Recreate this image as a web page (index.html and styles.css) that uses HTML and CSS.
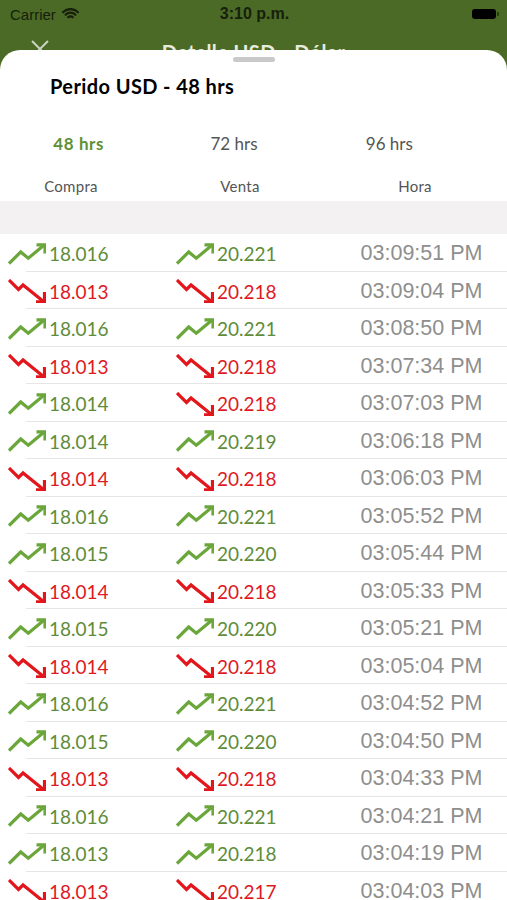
FILE: index.html
```html
<!DOCTYPE html>
<html lang="es">
  <head>
    <title>Detalle USD - Dólar</title>
    <meta charset="UTF-8">
    <meta name="viewport" content="width=device-width, initial-scale=1.0">
    <link rel="stylesheet" href="styles.css">
  </head>

  <body>
    <svg class="defs" width="0" height="0">
      <defs>
        <symbol id="ico-up" viewBox="0 0 38 24">
          <path d="M1 21.5 L12.7 10 L20.3 16.2 L36.5 2.8" />
          <path d="M28.5 2.8 H37 V11.5" />
        </symbol>
        <symbol id="ico-down" viewBox="0 0 38 24">
          <path d="M1 1 L10.5 10.5 L15 6 L35.5 22.5" />
          <path d="M36.5 13 V22.8 H28" />
        </symbol>
      </defs>
    </svg>

    <div class="top">
      <div class="status">
        <div class="carrier">
          Carrier
          <svg class="wifi" width="17" height="12" viewBox="0 0 17 12">
            <path d="M1 4.2 A10.5 10.5 0 0 1 16 4.2" />
            <path d="M3.6 6.8 A6.8 6.8 0 0 1 13.4 6.8" />
            <path d="M6.2 9.3 A3.2 3.2 0 0 1 10.8 9.3" />
          </svg>
        </div>
        <div class="clock">3:10 p.m.</div>
        <div class="battery"><span></span></div>
      </div>
      <div class="nav">
        <svg class="close" width="20" height="20" viewBox="0 0 20 20">
          <path d="M2 2 L18 18 M18 2 L2 18" />
        </svg>
        <div class="nav-title">Detalle USD - Dólar</div>
      </div>
    </div>

    <div class="sheet">
      <div class="grabber"></div>
      <h1 class="sheet-title">Perido USD - 48 hrs</h1>

      <div class="tabs">
        <div class="tab active">48 hrs</div>
        <div class="tab">72 hrs</div>
        <div class="tab">96 hrs</div>
      </div>

      <div class="cols">
        <div>Compra</div>
        <div>Venta</div>
        <div>Hora</div>
      </div>

      <div class="band"></div>

      <div id="list" class="list"></div>
    </div>

    <script>
      // datos del periodo: [compra, tendencia, venta, tendencia, hora]
      var rows = [
        ["18.016", 1, "20.221", 1, "03:09:51 PM"],
        ["18.013", 0, "20.218", 0, "03:09:04 PM"],
        ["18.016", 1, "20.221", 1, "03:08:50 PM"],
        ["18.013", 0, "20.218", 0, "03:07:34 PM"],
        ["18.014", 1, "20.218", 0, "03:07:03 PM"],
        ["18.014", 1, "20.219", 1, "03:06:18 PM"],
        ["18.014", 0, "20.218", 0, "03:06:03 PM"],
        ["18.016", 1, "20.221", 1, "03:05:52 PM"],
        ["18.015", 1, "20.220", 1, "03:05:44 PM"],
        ["18.014", 0, "20.218", 0, "03:05:33 PM"],
        ["18.015", 1, "20.220", 1, "03:05:21 PM"],
        ["18.014", 0, "20.218", 0, "03:05:04 PM"],
        ["18.016", 1, "20.221", 1, "03:04:52 PM"],
        ["18.015", 1, "20.220", 1, "03:04:50 PM"],
        ["18.013", 0, "20.218", 0, "03:04:33 PM"],
        ["18.016", 1, "20.221", 1, "03:04:21 PM"],
        ["18.013", 1, "20.218", 1, "03:04:19 PM"],
        ["18.013", 0, "20.217", 0, "03:04:03 PM"]
      ];

      function cell(value, up) {
        var cls = up ? "up" : "down";
        return '<div class="rate ' + cls + '">' +
          '<svg class="trend"><use href="#ico-' + cls + '"></use></svg>' +
          '<span>' + value + '</span></div>';
      }

      var html = "";
      rows.forEach(function (r) {
        html += '<div class="row">' + cell(r[0], r[1]) + cell(r[2], r[3]) +
          '<div class="time">' + r[4] + '</div></div>';
      });
      document.getElementById("list").innerHTML = html;
    </script>
  </body>
</html>
```

FILE: styles.css
```css
body {
  margin: 0;
  height: 900px;
  overflow: hidden;
  background-color: #4b6a26;
  font-family: Lato, "Open Sans", sans-serif;
}

.defs {
  position: absolute;
}

/* barra de estado + navegacion detras del sheet */
.top {
  height: 50px;
  overflow: hidden;
}

.status {
  height: 28px;
  display: grid;
  grid-template-columns: 1fr auto 1fr;
  align-items: center;
  padding: 0 8px 0 10px;
  color: #16200c;
  font-family: "Liberation Sans", sans-serif;
}

.carrier {
  display: flex;
  align-items: center;
  gap: 6px;
  font-size: 15px;
}

.wifi path {
  fill: none;
  stroke: #16200c;
  stroke-width: 2.2;
  stroke-linecap: round;
}

.clock {
  font-size: 16px;
  font-weight: bold;
}

.battery {
  justify-self: end;
  display: flex;
  align-items: center;
}

.battery span {
  width: 24px;
  height: 10px;
  border-radius: 3px;
  background-color: #000;
}

.battery::after {
  content: "";
  width: 2px;
  height: 4px;
  margin-left: 1px;
  border-radius: 0 1px 1px 0;
  background-color: #2a3a18;
}

.nav {
  display: grid;
  grid-template-columns: 1fr;
  padding-top: 11px;
}

.close {
  grid-area: 1 / 1;
  margin-left: 30px;
}

.close path {
  stroke: #c9d3bf;
  stroke-width: 2;
}

.nav-title {
  grid-area: 1 / 1;
  text-align: center;
  color: #e6ecdf;
  font-size: 20px;
  font-weight: bold;
  letter-spacing: 0.4px;
  line-height: 22px;
  padding-top: 2px;
}

/* sheet */
.sheet {
  background-color: #fff;
  border-radius: 20px 20px 0 0;
  height: 850px;
}

.grabber {
  width: 42px;
  height: 5px;
  margin: 0 auto;
  position: relative;
  top: 7px;
  border-radius: 3px;
  background-color: #c9c9c9;
}

.sheet-title {
  margin: 19px 0 0;
  padding-left: 50px;
  font-size: 20px;
  font-weight: bold;
  letter-spacing: 0.4px;
  line-height: 24px;
  color: #000;
}

.tabs {
  display: grid;
  grid-template-columns: repeat(3, 1fr);
  padding: 0 40px 0 1px;
  margin-top: 36px;
  text-align: center;
  font-size: 17px;
  line-height: 20px;
  color: #555;
}

.tab.active {
  color: #5e9135;
  font-weight: bold;
  letter-spacing: 0.6px;
}

.cols {
  display: grid;
  grid-template-columns: 142px 196px 154px;
  margin-top: 23px;
  text-align: center;
  font-size: 15px;
  letter-spacing: 0.3px;
  line-height: 18px;
  color: #555;
}

.band {
  height: 33px;
  margin-top: 6px;
  background-color: #f3f1f1;
}

.row {
  height: 37.5px;
  display: grid;
  grid-template-columns: 168px 164px 1fr;
  align-items: center;
  padding: 2px 4px 0 8px;
  box-sizing: border-box;
  background: linear-gradient(#e6e6e6, #e6e6e6) no-repeat 26px 100% / calc(100% - 26px) 1px;
}

.rate {
  display: flex;
  align-items: center;
  gap: 3px;
  font-size: 19px;
}

.trend {
  width: 38px;
  height: 24px;
  fill: none;
  stroke-width: 3.2;
  stroke-linejoin: miter;
}

.rate.up {
  color: #5e8c39;
}

.rate.up .trend {
  stroke: #6aa63a;
}

.rate.down {
  color: #de1a1f;
}

.rate.down .trend {
  stroke: #e3161c;
}

.time {
  text-align: center;
  font-family: "Liberation Sans", sans-serif;
  font-size: 21.5px;
  color: #8e8e8e;
}
```
